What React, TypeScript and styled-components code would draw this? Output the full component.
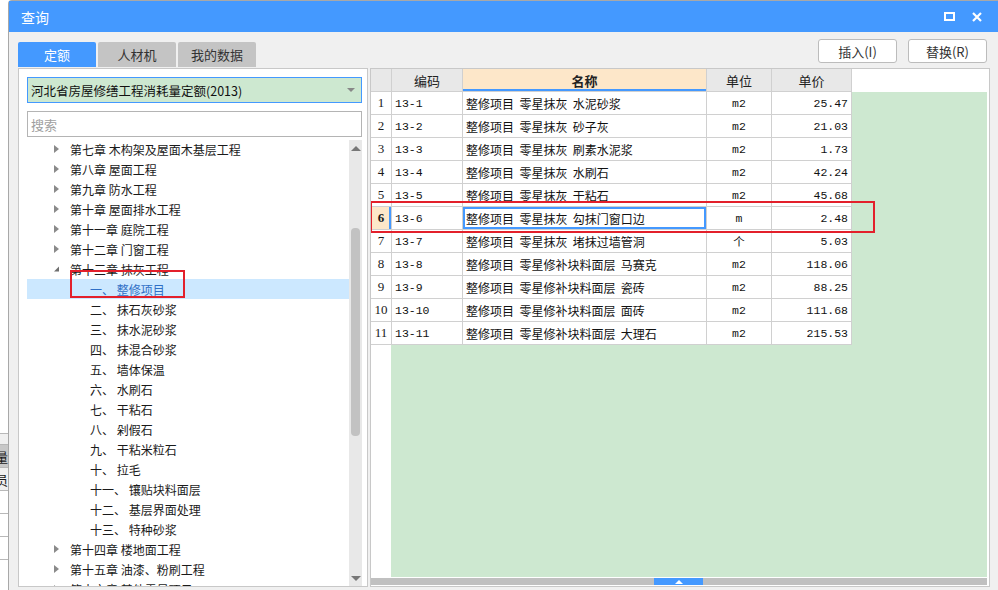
import React from 'react';
import styled, { createGlobalStyle } from 'styled-components';

interface IChapter {
  title: string;
  open?: boolean;
  items?: string[];
}

interface IQuota {
  code: string;
  name: string;
  unit: string;
  price: string;
}

const GlobalStyle = createGlobalStyle`
  body {
    margin: 0;
    font-family: "Noto Sans CJK SC", "Noto Sans", sans-serif;
    color: #1a1a1a;
  }
`;

const Page = styled.div`
  display: flex;
  width: 998px;
  height: 590px;
  overflow: hidden;
  background: #fff;
`;

const BackStrip = styled.div`
  width: 8px;
  display: flex;
  flex-direction: column;
  padding-top: 433px;
  box-sizing: border-box;
  overflow: hidden;
`;

const BackCell = styled.div<{ $tone: string; $h: number }>`
  height: ${(p) => p.$h}px;
  background: ${(p) => p.$tone};
  border-top: 1px solid #b8b8b8;
  display: flex;
  justify-content: flex-end;
  align-items: center;
  font-size: 13px;
  white-space: nowrap;
  overflow: hidden;
`;

const Dialog = styled.div`
  flex: 1;
  display: flex;
  flex-direction: column;
  background: #f0f0f0;
  border-left: 1px solid #a8a8a8;
  border-top: 1px solid #a8a8a8;
  border-top-left-radius: 4px;
  min-width: 0;
`;

const TitleBar = styled.div`
  height: 31px;
  background: #4499ff;
  display: flex;
  align-items: center;
  padding: 0 8px 0 12px;
  color: #fff;
  font-size: 14px;
`;

const Title = styled.span`
  flex: 1;
`;

const WinButton = styled.span`
  width: 27px;
  height: 20px;
  display: flex;
  align-items: center;
  justify-content: center;
`;

const Toolbar = styled.div`
  height: 36px;
  display: flex;
  padding: 0 11px 0 9px;
`;

const Tabs = styled.div`
  display: flex;
  gap: 2px;
  align-self: flex-end;
  flex: 1;
  padding-bottom: 1px;
`;

const Tab = styled.div<{ $active?: boolean }>`
  width: 78px;
  height: 25px;
  display: flex;
  align-items: center;
  justify-content: center;
  font-size: 13px;
  border-radius: 2px 2px 0 0;
  background: ${(p) => (p.$active ? '#4499ff' : '#c4c4c4')};
  color: ${(p) => (p.$active ? '#fff' : '#333')};
`;

const Actions = styled.div`
  display: flex;
  gap: 11px;
  margin-top: 7px;
`;

const Button = styled.button`
  width: 79px;
  height: 24px;
  border: 1px solid #bcbcbc;
  border-radius: 3px;
  background: #fff;
  font-family: inherit;
  font-size: 13px;
  color: #333;
  padding: 0;
`;

const Main = styled.div`
  flex: 1;
  min-height: 0;
  display: flex;
  gap: 2px;
  padding: 0 8px 3px 9px;
`;

const LeftPanel = styled.div`
  width: 350px;
  box-sizing: border-box;
  background: #fff;
  border: 1px solid #c8c8c8;
  padding: 8px 5px 0 8px;
  display: flex;
  flex-direction: column;
  gap: 8px;
`;

const Select = styled.div`
  height: 26px;
  box-sizing: border-box;
  border: 1px solid #4499ff;
  background: #cde8d0;
  display: flex;
  align-items: center;
  padding: 0 6px 0 3px;
  font-size: 12.5px;
  color: #111;
`;

const SelectText = styled.span`
  flex: 1;
`;

const Caret = styled.span`
  width: 0;
  height: 0;
  border-left: 4px solid transparent;
  border-right: 4px solid transparent;
  border-top: 4px solid #888;
`;

const Search = styled.div`
  height: 26px;
  box-sizing: border-box;
  border: 1px solid #b4b4b4;
  display: flex;
  align-items: center;
  padding: 0 3px;
  font-size: 13px;
  color: #a0a0a0;
`;

const TreeWrap = styled.div`
  flex: 1;
  min-height: 0;
  display: flex;
  margin-top: -5px;
`;

const TreeList = styled.div`
  flex: 1;
  overflow: hidden;
  margin-top: -1px;
`;

const TreeRow = styled.div<{ $sub?: boolean; $selected?: boolean }>`
  position: relative;
  height: 20px;
  display: flex;
  align-items: center;
  padding-left: ${(p) => (p.$sub ? '63px' : '27px')};
  font-size: 12px;
  white-space: pre;
  background: ${(p) => (p.$selected ? '#cce8ff' : 'transparent')};
  color: ${(p) => (p.$selected ? '#2f6fc6' : '#1a1a1a')};
`;

const Arrow = styled.span`
  width: 5px;
  height: 8px;
  margin-right: 11px;
  display: flex;
  align-items: center;
`;

const Marker = styled.div`
  position: absolute;
  border: 2px solid #e3202b;
  pointer-events: none;
`;

const VScroll = styled.div`
  width: 13px;
  background: #e8e8e8;
  display: flex;
  flex-direction: column;
  align-items: center;
`;

const ScrollBtn = styled.div<{ $down?: boolean }>`
  height: 16px;
  display: flex;
  align-items: center;
  justify-content: center;
  &::after {
    content: '';
    border-left: 5px solid transparent;
    border-right: 5px solid transparent;
    ${(p) => (p.$down ? 'border-top: 5px solid #777;' : 'border-bottom: 5px solid #777;')}
  }
`;

const ScrollTrack = styled.div`
  flex: 1;
  width: 100%;
  padding-top: 72px;
  box-sizing: border-box;
  display: flex;
  justify-content: center;
`;

const Thumb = styled.div`
  width: 9px;
  height: 208px;
  border-radius: 4px;
  background: #c2c2c2;
`;

const RightPanel = styled.div`
  flex: 1;
  min-width: 0;
  background: #fff;
  border: 1px solid #c8c8c8;
  padding: 0 2px 1px 0;
  display: flex;
  flex-direction: column;
`;

const GridArea = styled.div`
  position: relative;
  flex: 1;
  min-height: 0;
  background-color: #cde8d0;
  background-image: linear-gradient(#fff, #fff), linear-gradient(#fff, #fff);
  background-size: 100% 23px, 20px 100%;
  background-repeat: no-repeat;
  margin-bottom: 1px;
  overflow: hidden;
`;

const Table = styled.table`
  border-collapse: collapse;
  table-layout: fixed;
  background: #fff;
  font-size: 12px;
`;

const HeadCell = styled.th<{ $w: number; $hot?: boolean }>`
  width: ${(p) => p.$w}px;
  height: 22px;
  padding: 0;
  border: 1px solid #d0d0d0;
  border-top: none;
  font-size: 13px;
  font-weight: ${(p) => (p.$hot ? 700 : 400)};
  color: #222;
  background: ${(p) => (p.$hot ? '#fde7c9' : '#e8e8e8')};
  box-shadow: ${(p) => (p.$hot ? 'inset 0 -2px 0 #4499ff' : 'none')};
  &:first-child {
    border-left: none;
  }
`;

const Cell = styled.td<{ $align?: string; $mono?: boolean; $focus?: boolean }>`
  height: 22px;
  padding: 0 3px;
  border: 1px solid #d0d0d0;
  text-align: ${(p) => p.$align || 'left'};
  font-family: ${(p) =>
    p.$mono ? '"Liberation Mono", "Noto Sans CJK SC", monospace' : 'inherit'};
  font-size: ${(p) => (p.$mono ? '11.5px' : '12px')};
  white-space: pre;
  overflow: hidden;
  color: #111;
  box-shadow: ${(p) => (p.$focus ? 'inset 0 0 0 2px #4499ff' : 'none')};
`;

const NumCell = styled.td<{ $active?: boolean }>`
  height: 22px;
  padding: 0;
  border: 1px solid #d0d0d0;
  border-left: none;
  text-align: center;
  font-family: "Liberation Serif", serif;
  font-size: 13px;
  font-weight: ${(p) => (p.$active ? 700 : 400)};
  background: ${(p) => (p.$active ? '#fde7c9' : '#fff')};
  box-shadow: ${(p) => (p.$active ? 'inset -2px 0 0 #4499ff' : 'none')};
`;

const HScroll = styled.div`
  height: 7px;
  background: #c0c0c0;
  display: flex;
  padding-left: 283px;
`;

const HThumb = styled.div`
  width: 49px;
  background: #4499ff;
  display: flex;
  align-items: flex-end;
  justify-content: center;
  &::after {
    content: '';
    border-left: 4px solid transparent;
    border-right: 4px solid transparent;
    border-bottom: 4px solid #fff;
    margin-bottom: 1px;
  }
`;

const chapters: IChapter[] = [
  { title: '第七章 木构架及屋面木基层工程' },
  { title: '第八章 屋面工程' },
  { title: '第九章 防水工程' },
  { title: '第十章 屋面排水工程' },
  { title: '第十一章 庭院工程' },
  { title: '第十二章 门窗工程' },
  {
    title: '第十三章 抹灰工程',
    open: true,
    items: [
      '一、 整修项目',
      '二、 抹石灰砂浆',
      '三、 抹水泥砂浆',
      '四、 抹混合砂浆',
      '五、 墙体保温',
      '六、 水刷石',
      '七、 干粘石',
      '八、 剁假石',
      '九、 干粘米粒石',
      '十、 拉毛',
      '十一、 镶贴块料面层',
      '十二、 基层界面处理',
      '十三、 特种砂浆',
    ],
  },
  { title: '第十四章 楼地面工程' },
  { title: '第十五章 油漆、粉刷工程' },
  { title: '第十六章 其他零星项目' },
];

const quotas: IQuota[] = [
  { code: '13-1', name: '整修项目  零星抹灰  水泥砂浆', unit: 'm2', price: '25.47' },
  { code: '13-2', name: '整修项目  零星抹灰  砂子灰', unit: 'm2', price: '21.03' },
  { code: '13-3', name: '整修项目  零星抹灰  刷素水泥浆', unit: 'm2', price: '1.73' },
  { code: '13-4', name: '整修项目  零星抹灰  水刷石', unit: 'm2', price: '42.24' },
  { code: '13-5', name: '整修项目  零星抹灰  干粘石', unit: 'm2', price: '45.68' },
  { code: '13-6', name: '整修项目  零星抹灰  勾抹门窗口边', unit: 'm', price: '2.48' },
  { code: '13-7', name: '整修项目  零星抹灰  堵抹过墙管洞', unit: '个', price: '5.03' },
  { code: '13-8', name: '整修项目  零星修补块料面层  马赛克', unit: 'm2', price: '118.06' },
  { code: '13-9', name: '整修项目  零星修补块料面层  瓷砖', unit: 'm2', price: '88.25' },
  { code: '13-10', name: '整修项目  零星修补块料面层  面砖', unit: 'm2', price: '111.68' },
  { code: '13-11', name: '整修项目  零星修补块料面层  大理石', unit: 'm2', price: '215.53' },
];

const ArrowIcon = ({ open }: { open?: boolean }) =>
  open ? (
    <svg width="6" height="6" viewBox="0 0 6 6">
      <path d="M6 0 L6 6 L0 6 Z" fill="#6f6f6f" />
    </svg>
  ) : (
    <svg width="5" height="8" viewBox="0 0 5 8">
      <path d="M0 0 L5 4 L0 8 Z" fill="#8a8a8a" />
    </svg>
  );

const App = () => {
  const treeRows: React.ReactNode[] = [];
  chapters.forEach((ch) => {
    treeRows.push(
      <TreeRow key={ch.title}>
        <Arrow>
          <ArrowIcon open={ch.open} />
        </Arrow>
        {ch.title}
      </TreeRow>
    );
    if (ch.open && ch.items) {
      ch.items.forEach((item, i) => {
        treeRows.push(
          <TreeRow key={item} $sub $selected={i === 0}>
            {item}
            {i === 0 && (
              <Marker style={{ left: 43, top: -9, width: 111, height: 24 }} />
            )}
          </TreeRow>
        );
      });
    }
  });

  return (
    <Page>
      <GlobalStyle />
      <BackStrip>
        <BackCell $tone="#f0f0f0" $h={10} />
        <BackCell $tone="#c8c8c8" $h={22}>
          工程量
        </BackCell>
        <BackCell $tone="#f0f0f0" $h={22}>
          人员
        </BackCell>
        <BackCell $tone="#fff" $h={22} />
        <BackCell $tone="#fff" $h={22} />
        <BackCell $tone="#fff" $h={22} />
        <BackCell $tone="#fff" $h={22} />
      </BackStrip>
      <Dialog>
        <TitleBar>
          <Title>查询</Title>
          <WinButton>
            <svg width="11" height="9" viewBox="0 0 11 9">
              <rect x="1" y="1" width="9" height="7" fill="none" stroke="#fff" strokeWidth="2" />
            </svg>
          </WinButton>
          <WinButton>
            <svg width="10" height="10" viewBox="0 0 10 10">
              <path d="M1 1 L9 9 M9 1 L1 9" stroke="#fff" strokeWidth="2.2" />
            </svg>
          </WinButton>
        </TitleBar>
        <Toolbar>
          <Tabs>
            <Tab $active>定额</Tab>
            <Tab>人材机</Tab>
            <Tab>我的数据</Tab>
          </Tabs>
          <Actions>
            <Button>插入(I)</Button>
            <Button>替换(R)</Button>
          </Actions>
        </Toolbar>
        <Main>
          <LeftPanel>
            <Select>
              <SelectText>河北省房屋修缮工程消耗量定额(2013)</SelectText>
              <Caret />
            </Select>
            <Search>搜索</Search>
            <TreeWrap>
              <TreeList>{treeRows}</TreeList>
              <VScroll>
                <ScrollBtn />
                <ScrollTrack>
                  <Thumb />
                </ScrollTrack>
                <ScrollBtn $down />
              </VScroll>
            </TreeWrap>
          </LeftPanel>
          <RightPanel>
            <GridArea>
              <Table>
                <thead>
                  <tr>
                    <HeadCell $w={20} />
                    <HeadCell $w={70}>编码</HeadCell>
                    <HeadCell $w={243} $hot>
                      名称
                    </HeadCell>
                    <HeadCell $w={64}>单位</HeadCell>
                    <HeadCell $w={79}>单价</HeadCell>
                  </tr>
                </thead>
                <tbody>
                  {quotas.map((q, i) => {
                    const active = i === 5;
                    return (
                      <tr key={q.code}>
                        <NumCell $active={active}>{i + 1}</NumCell>
                        <Cell $mono>{q.code}</Cell>
                        <Cell $focus={active}>{q.name}</Cell>
                        <Cell $align="center" $mono>
                          {q.unit}
                        </Cell>
                        <Cell $align="right" $mono>
                          {q.price}
                        </Cell>
                      </tr>
                    );
                  })}
                </tbody>
              </Table>
              <Marker style={{ left: -1, top: 132, width: 501, height: 28 }} />
            </GridArea>
            <HScroll>
              <HThumb />
            </HScroll>
          </RightPanel>
        </Main>
      </Dialog>
    </Page>
  );
};

export default App;
